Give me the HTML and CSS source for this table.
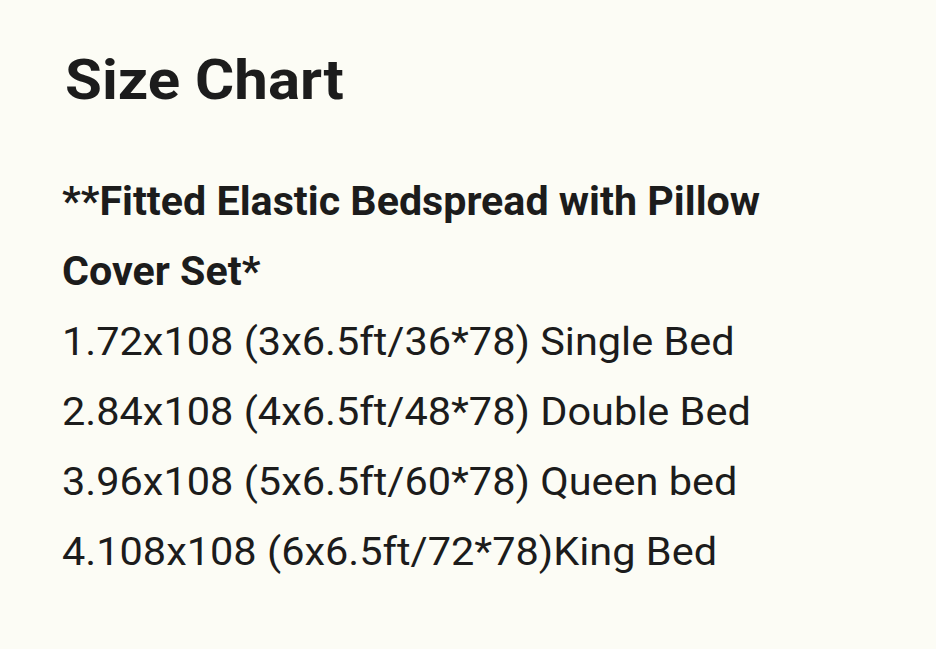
FILE: index.html
```html
<!DOCTYPE html>
<html>
<head>
<meta charset="utf-8">
<link rel="stylesheet" href="styles.css">
</head>
<body>
<main class="page">
  <h1 class="title">Size Chart</h1>
  <div class="details">
    <p class="subtitle">**Fitted Elastic Bedspread with Pillow Cover Set*</p>
    <p class="line">1.72x108 (3x6.5ft/36*78) Single Bed</p>
    <p class="line">2.84x108 (4x6.5ft/48*78) Double Bed</p>
    <p class="line">3.96x108 (5x6.5ft/60*78) Queen bed</p>
    <p class="line">4.108x108 (6x6.5ft/72*78)King Bed</p>
  </div>
</main>
</body>
</html>
```

FILE: styles.css
```css
html, body {
  margin: 0;
  padding: 0;
  background: #fcfcf5;
}
body {
  font-family: Roboto, "Liberation Sans", sans-serif;
  color: #1c1c1c;
}
.page {
  width: 936px;
  height: 649px;
  box-sizing: border-box;
  padding: 53px 0 0 62px;
  overflow: hidden;
}
.title {
  margin: 0 0 0 3px;
  font-size: 55px;
  font-weight: 700;
  line-height: 55px;
  transform: scaleX(1.09);
  transform-origin: left center;
}
.details {
  margin-top: 59px;
  width: 680px;
  line-height: 70px;
}
.details p {
  margin: 0;
  transform-origin: left center;
}
.subtitle {
  font-size: 40px;
  font-weight: 700;
  transform: scaleX(1.03);
}
.line {
  font-size: 39.5px;
  font-weight: 400;
  transform: scaleX(1.05);
}
```
